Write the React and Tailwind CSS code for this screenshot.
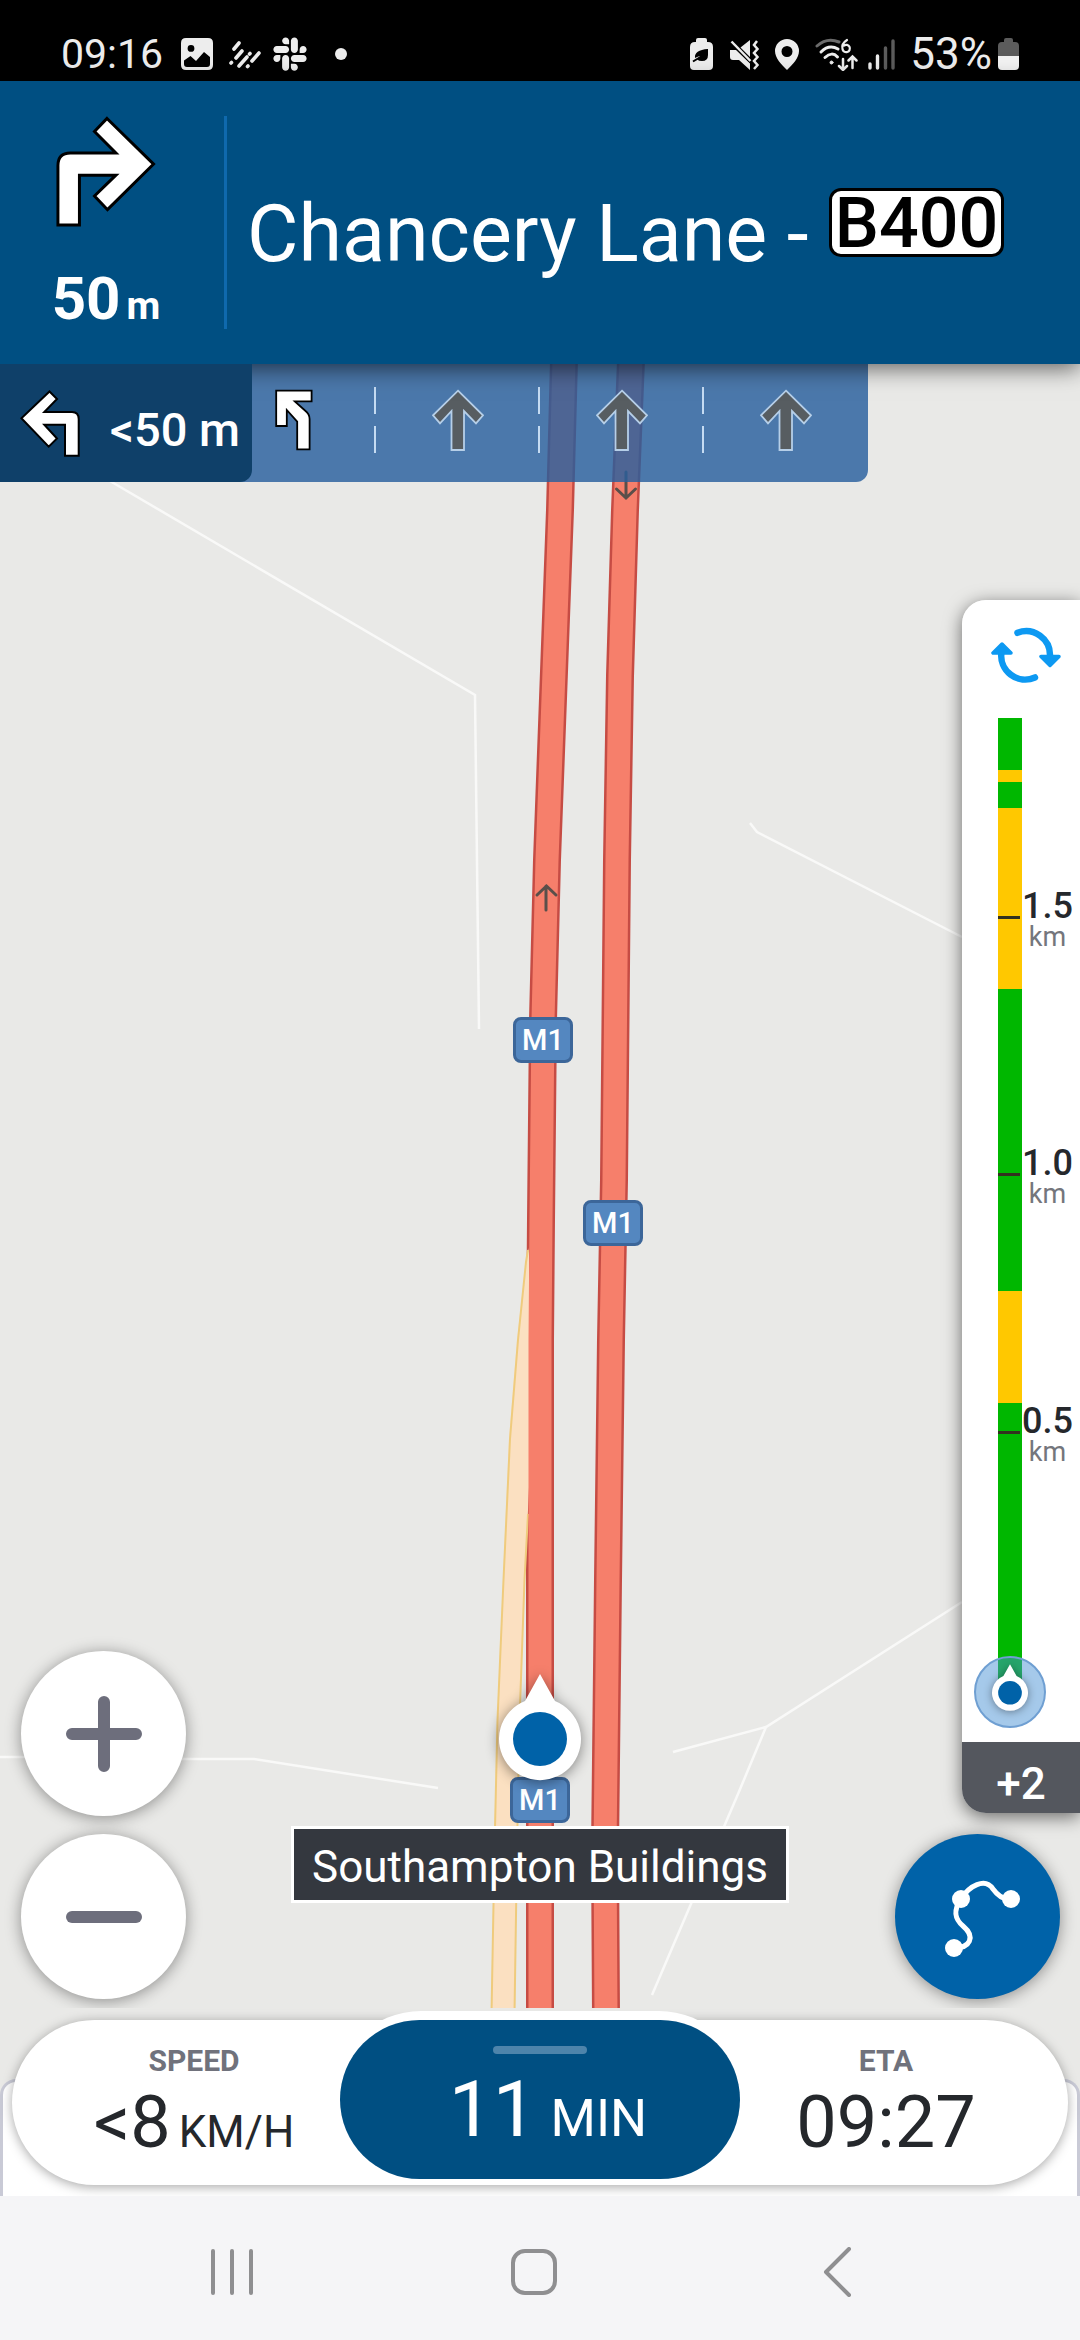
import { FaSlack } from 'react-icons/fa';

const TRAFFIC = [
  { color: 'bg-[#00b700]', height: 52 },
  { color: 'bg-[#ffc800]', height: 12 },
  { color: 'bg-[#00b700]', height: 26 },
  { color: 'bg-[#ffc800]', height: 181 },
  { color: 'bg-[#00b700]', height: 302 },
  { color: 'bg-[#ffc800]', height: 112 },
  { color: 'bg-[#00b700]', height: 277 },
];

const TICKS = [
  { label: '1.5', top: 170 },
  { label: '1.0', top: 427 },
  { label: '0.5', top: 685 },
];

const LEFT_ROAD = 'M564 -4 L560 146 L547 496 L543 656 L541 856 L540 976 V1650';
const RIGHT_ROAD = 'M631 -4 L625 146 L620 312 L617 496 L614 816 L611 976 L608 1216 L606 1396 L605 1486 L606 1650';

function StatusBar() {
  return (
    <div className="h-[81px] bg-black text-[#ededed] flex items-end justify-between pl-[61px] pr-[61px] pb-[6px]">
      <div className="flex items-center">
        <span className="text-[41px] leading-[42px]">09:16</span>
        <svg className="ml-[18px] w-8 h-8" viewBox="0 0 32 32" fill="currentColor">
          <path fillRule="evenodd" d="M5 0H27Q32 0 32 5V27Q32 32 27 32H5Q0 32 0 27V5Q0 0 5 0ZM10 7A3.4 3.4 0 1 0 10 13.800A3.400 3.400 0 1 0 10 7ZM3 22.500L9.500 18L15 23L23 14L29 19V26Q29 29 26 29H6Q3 29 3 26Z" />
        </svg>
        <svg className="ml-4 w-8 h-8" viewBox="0 0 32 32" fill="none" stroke="currentColor" strokeWidth="3.600" strokeLinecap="round">
          <path d="M5 11L10 5M7 20L13 13M2 25L2.500 24.500M10 28L18 19M20.500 16L21 15.500M18.500 28.500L19 28M23 23L30 15" />
        </svg>
        <FaSlack className="ml-3 w-[34px] h-[38px]" />
        <span className="ml-7 w-3 h-3 rounded-full bg-[#ededed]" />
      </div>
      <div className="flex items-center">
        <svg className="w-[23px] h-8" viewBox="0 0 23 32" fill="currentColor">
          <path d="M6 4V2Q6 0 8 0H15Q17 0 17 2V4H18Q23 4 23 9V28Q23 32 19 32H4Q0 32 0 28V9Q0 4 5 4Z" />
          <path d="M3 23.500L12 18" stroke="#000" strokeWidth="2" />
          <path d="M18 11V17Q18 23 12 23Q9 23 7 21.500L12 18Q8 18 5 20Q4 12 18 11Z" fill="#000" />
        </svg>
        <svg className="ml-4 w-[31px] h-[31px]" viewBox="0 0 31 31" fill="currentColor">
          <path d="M1 11H7L21 24.500V31L10 21H4Q1 21 1 18ZM21 1V18L11.500 8.500Z" />
          <path d="M2 3L24 25" fill="none" stroke="#000" strokeWidth="3" />
          <path d="M2.500 2.500L21.500 22" fill="none" stroke="currentColor" strokeWidth="2.500" />
          <path d="M28 2L25 6L28.500 10L25 14L28.500 18L25 22L28.500 26L25 30" fill="none" stroke="currentColor" strokeWidth="2.500" />
        </svg>
        <svg className="ml-[15px] w-6 h-[31px]" viewBox="0 0 24 31" fill="currentColor">
          <path fillRule="evenodd" d="M12 0A12 12 0 0 1 24 12C24 19 18 25 12 31C6 25 0 19 0 12A12 12 0 0 1 12 0ZM12 7A5.500 5.500 0 1 0 12 18A5.500 5.500 0 1 0 12 7Z" />
        </svg>
        <svg className="ml-4 w-[43px] h-[33px]" viewBox="0 0 43 33" fill="none" stroke="currentColor" strokeLinecap="round">
          <path d="M2 8Q12 -1 24 4" strokeWidth="3" stroke="#6b6b6b" />
          <path d="M6 14Q14 6 23 11M10 19.500Q17 13 22.500 19" strokeWidth="3" />
          <circle cx="16.500" cy="24.500" r="1.500" fill="currentColor" strokeWidth="1" />
          <path d="M32 2Q26 6 27.500 11A3.700 3.700 0 1 0 29 7.500" strokeWidth="2.200" />
          <path d="M28 21V31M24 28L28 32L32 28M37.500 30V19M33.500 22.500L37.500 18.500L41.500 22.500" strokeWidth="2.500" />
        </svg>
        <svg className="ml-2.5 w-7 h-[31px]" viewBox="0 0 28 31" stroke="currentColor" strokeWidth="3.400" strokeLinecap="round">
          <path d="M2 25V29M9.500 17V29" />
          <path d="M17.500 9V29M25 2V29" stroke="#5c5c5c" />
        </svg>
        <span className="ml-3.5 text-[44px] leading-[42px]">53%</span>
        <svg className="ml-1.5 w-[21px] h-8" viewBox="0 0 21 32">
          <path d="M6 4V2Q6 0 8 0H13Q15 0 15 2V4H17Q21 4 21 8V18H0V8Q0 4 4 4Z" fill="#5c5c5c" />
          <path d="M0 18H21V28Q21 32 17 32H4Q0 32 0 28Z" fill="#f2f2f2" />
        </svg>
      </div>
    </div>
  );
}

function ManeuverHeader() {
  return (
    <header className="relative z-10 bg-[#004f82] text-white flex py-[35px] shadow-[0_4px_22px_rgba(0,0,0,0.6)]">
      <div className="w-56 h-[213px] shrink-0 flex flex-col items-center pr-3">
        <svg className="w-[100px] h-[112px]" viewBox="0 0 100 112" fill="#fff" stroke="#000" strokeWidth="3">
          <path d="M51 2.500L98 48.500L51.500 94.500L38.400 80.700L60 59.700H23.200V110H1.500V50Q1.500 37.300 14 37.300H60L38.400 15.700Z" />
        </svg>
        <div className="mt-[42px] flex items-baseline gap-1.5 font-bold leading-none">
          <span className="text-[60px] leading-none">50</span>
          <span className="text-[39px] leading-none">m</span>
        </div>
      </div>
      <div className="w-[3px] shrink-0 bg-[#0f69ad]" />
      <div className="flex items-center pl-5 whitespace-nowrap">
        <h1 className="pt-6 text-[79px] leading-none">Chancery Lane -</h1>
        <span className="ml-5 h-[69px] px-[3px] flex items-center rounded-xl border-[3px] border-black bg-white text-black text-[70px] leading-none font-medium">
          B400
        </span>
      </div>
    </header>
  );
}

function StraightArrow() {
  return (
    <svg className="w-[52px] h-[62px]" viewBox="0 0 52 62" fill="#575d61" stroke="#b6cfe8" strokeWidth="1.800">
      <path d="M26 1.700L51 26.300L44 34.300L32 22V61H19.500V22L8 34.300L1 26.300Z" />
    </svg>
  );
}

function LaneDivider() {
  return (
    <span className="absolute right-0 top-[23px] flex flex-col gap-3">
      <span className="w-0.5 h-[27px] bg-[#c5dbf2]" />
      <span className="w-0.5 h-[27px] bg-[#c5dbf2]" />
    </span>
  );
}

function LaneGuidance() {
  return (
    <div className="relative flex h-[118px]">
      <div className="relative z-20 w-[252px] flex items-center gap-[30px] pl-5 rounded-br-xl bg-[#0f4069] text-white">
        <svg className="w-[60px] h-[67px]" viewBox="0 0 60 67" fill="#fff" stroke="#000" strokeWidth="2">
          <path d="M29.500 1.500L37 9L24.300 22H52Q58.700 22 58.700 29V65.700H45V34.700H24.300L37 48.500L28.700 56.700L1.400 28.300Z" />
        </svg>
        <span className="pt-3 text-[47px] leading-none font-medium whitespace-nowrap">&lt;50 m</span>
      </div>
      <div className="-ml-10 w-[656px] grid grid-cols-4 rounded-br-xl bg-[rgba(40,95,158,0.82)]">
        <div className="relative flex justify-center pt-[25px]">
          <svg className="w-[38px] h-[62px]" viewBox="0 0 38 62" fill="#fff" stroke="#000" strokeWidth="1.800">
            <path d="M1.200 1.700H36.600V12.300H19.800L30 21.500Q34.600 25 34.600 30V60.300H22.200V32.700L11.800 21V37H1.200Z" />
          </svg>
          <LaneDivider />
        </div>
        <div className="relative flex justify-center pt-[25px]">
          <StraightArrow />
          <LaneDivider />
        </div>
        <div className="relative flex justify-center pt-[25px]">
          <StraightArrow />
          <LaneDivider />
        </div>
        <div className="flex justify-center pt-[25px]">
          <StraightArrow />
        </div>
      </div>
    </div>
  );
}

function MapCanvas() {
  return (
    <svg className="absolute inset-0 w-full h-full" viewBox="0 0 1080 1644" preserveAspectRatio="xMidYMid slice" fill="none">
      <g stroke="#f9f9f8" strokeWidth="2.500">
        <path d="M110 117L475 331L479 665" />
        <path d="M750 459L757 468L962 573" />
        <path d="M673 1388L766 1363L962 1238M766 1363L738 1430L652 1631" />
        <path d="M0 1393H40L185 1395L254 1395L438 1424" />
      </g>
      <path d={LEFT_ROAD} stroke="#c64c44" strokeWidth="28" />
      <path d={RIGHT_ROAD} stroke="#c64c44" strokeWidth="28" />
      <path
        d="M529 884L526 898L517 976L509 1075L503 1216L497 1356L494 1486L491 1650H515L517 1486L519.500 1356L525 1216L530 1100Z"
        fill="#fbe0c1"
      />
      <path
        d="M528 886L526 898L518 976L510 1075L503.500 1216L497.500 1356L494.500 1486L491.500 1650M514.500 1650L517 1486L519.500 1356L524.500 1216L528 1150"
        stroke="#efcb7d"
        strokeWidth="2"
      />
      <path d={LEFT_ROAD} stroke="#f67f6b" strokeWidth="23" />
      <path d={RIGHT_ROAD} stroke="#f67f6b" strokeWidth="23" />
      {/* one-way arrows */}
      <g stroke="#5a4f4a" strokeWidth="3" strokeLinecap="round">
        <path d="M546 546V522M537 531L546.500 522L556 531" />
        <path d="M626 108V134M616.500 125L626 134L635.500 125" />
      </g>
    </svg>
  );
}

function RoadShield({ className }) {
  return (
    <span className={'absolute w-[60px] h-[46px] flex items-center justify-center rounded-lg border-[3px] border-[#3c6699] bg-[#5487c0] text-white text-[29px] leading-none font-medium ' + className}>
      M1
    </span>
  );
}

function VehicleMarker({ className }) {
  return (
    <svg className={'overflow-visible ' + className} viewBox="0 0 82 106">
      <path d="M41 0L56 27A41 41 0 1 1 26 27Z" fill="#fff" />
      <circle cx="41" cy="65" r="27" fill="#0062a8" />
    </svg>
  );
}

function TrafficPanel() {
  return (
    <aside className="absolute right-0 top-[236px] w-[118px] rounded-l-3xl shadow-[0_4px_18px_rgba(0,0,0,0.55)]">
      <div className="h-[1142px] rounded-tl-3xl bg-white pt-[26px]">
        <button type="button" aria-label="Refresh traffic" className="block ml-[27px] w-[74px] h-[58px]">
          <svg className="w-[74px] h-[58px]" viewBox="0 0 74 58" fill="none" stroke="#0d99f2" strokeWidth="6.500" strokeLinecap="round" strokeLinejoin="round">
            <path d="M28.500 6.800A24 24 0 0 1 61 30M46 51.500A24 24 0 0 1 12.500 26" />
            <path d="M52 30.500H70L61 39.500ZM4 27H22L13 18Z" fill="#0d99f2" strokeWidth="3.500" />
          </svg>
        </button>
        <div className="relative mt-[34px] ml-9 w-6">
          {TRAFFIC.map((part, i) => (
            <div key={i} className={part.color} style={{ height: part.height }} />
          ))}
          {TICKS.map((tick) => (
            <div key={tick.label} className="absolute left-0 flex" style={{ top: tick.top }}>
              <span className="mt-7 w-[22px] h-[3px] bg-[#33311f]" />
              <span className="ml-0.5 flex flex-col items-center leading-none">
                <span className="text-[36px] leading-none font-medium text-[#25282c]">{tick.label}</span>
                <span className="text-[27px] leading-none text-[#74767c]">km</span>
              </span>
            </div>
          ))}
          <div className="absolute -left-6 -bottom-12 w-[72px] h-[72px] rounded-full border-2 border-[#6f9fd2] bg-[#4b93d6]/50 flex justify-center pt-1.5">
            <VehicleMarker className="w-9 h-[47px] drop-shadow-[0_1px_4px_rgba(0,0,0,0.4)]" />
          </div>
        </div>
      </div>
      <div className="h-[71px] pt-5 rounded-bl-3xl bg-[#54575e] text-white text-[44px] leading-none font-medium text-center">+2</div>
    </aside>
  );
}

function ZoomControls() {
  return (
    <div className="absolute left-[21px] bottom-[9px] flex flex-col gap-[18px]">
      <button type="button" aria-label="Zoom in" className="w-[165px] h-[165px] rounded-full bg-white flex items-center justify-center shadow-[0_2px_16px_rgba(0,0,0,0.4)]">
        <svg className="w-20 h-20" viewBox="0 0 80 80" stroke="#6d6e7c" strokeWidth="12" strokeLinecap="round">
          <path d="M8 40H72M40 8V72" />
        </svg>
      </button>
      <button type="button" aria-label="Zoom out" className="w-[165px] h-[165px] rounded-full bg-white flex items-center justify-center shadow-[0_2px_16px_rgba(0,0,0,0.4)]">
        <svg className="w-20 h-20" viewBox="0 0 80 80" stroke="#6d6e7c" strokeWidth="12" strokeLinecap="round">
          <path d="M8 40H72" />
        </svg>
      </button>
    </div>
  );
}

function RouteButton() {
  return (
    <button type="button" aria-label="Route overview" className="absolute right-5 bottom-[9px] w-[165px] h-[165px] rounded-full bg-[#0062a8] flex items-center justify-center shadow-[0_2px_16px_rgba(0,0,0,0.4)]">
      <svg className="w-[165px] h-[165px]" viewBox="0 0 165 165" fill="none" stroke="#fff" strokeWidth="5">
        <path d="M66 65C74 52 90 43 98 55C103 62 108 66 116 65M66 65C57 78 61 86 68 92C81 103 75 114 59 114" />
        <g fill="#fff" stroke="none">
          <circle cx="66" cy="65" r="9" />
          <circle cx="116" cy="65" r="9" />
          <circle cx="59" cy="114" r="9" />
        </g>
      </svg>
    </button>
  );
}

function TripBar() {
  return (
    <section className="relative h-[188px] px-3 pt-3 bg-[#e9e9e7] overflow-hidden">
      <div className="absolute inset-x-0 bottom-0 top-[71px] rounded-t-2xl border-[3px] border-b-0 border-[#c9cad6] bg-white" />
      <div className="relative h-[165px] px-[42px] grid grid-cols-[1fr_412px_1fr] rounded-full bg-white shadow-[0_2px_12px_rgba(0,0,0,0.35)]">
        <div className="pt-[26px] flex flex-col items-center whitespace-nowrap">
          <span className="text-[30px] leading-none font-bold text-[#70727c]">SPEED</span>
          <span className="mt-[11px] flex items-baseline gap-2 text-[#25282c]">
            <span className="text-[72px] leading-none">&lt;8</span>
            <span className="text-[44px] leading-none">KM/H</span>
          </span>
        </div>
        <button type="button" className="-mt-[9px] h-[174px] pt-[9px] pb-[6px] px-1.5 rounded-full bg-white">
          <span className="h-[159px] pt-[26px] rounded-full bg-[#004f82] text-white flex flex-col items-center">
            <span className="w-[94px] h-2 rounded bg-[#4e84ab]" />
            <span className="mt-[17px] ml-4 flex items-baseline gap-3.5 whitespace-nowrap">
              <span className="text-[78px] leading-none">11</span>
              <span className="text-[52px] leading-none">MIN</span>
            </span>
          </span>
        </button>
        <div className="pt-[26px] flex flex-col items-center">
          <span className="text-[30px] leading-none font-bold text-[#70727c]">ETA</span>
          <span className="mt-[11px] text-[72px] leading-none text-[#25282c]">09:27</span>
        </div>
      </div>
    </section>
  );
}

function SystemNav() {
  return (
    <nav className="h-36 pt-2 pl-[81px] pr-[92px] grid grid-cols-3 items-center justify-items-center bg-[#f5f5f7]">
      <button type="button" aria-label="Recent apps">
        <svg className="w-[50px] h-[50px]" viewBox="0 0 50 50" stroke="#8f8f91" strokeWidth="4" strokeLinecap="round">
          <path d="M6 4V46M25 4V46M44 4V46" />
        </svg>
      </button>
      <button type="button" aria-label="Home">
        <svg className="w-[50px] h-[50px]" viewBox="0 0 50 50" fill="none" stroke="#8f8f91" strokeWidth="4">
          <rect x="4" y="4" width="42" height="42" rx="12" />
        </svg>
      </button>
      <button type="button" aria-label="Back">
        <svg className="w-[50px] h-[50px]" viewBox="0 0 50 50" fill="none" stroke="#8f8f91" strokeWidth="4" strokeLinecap="round" strokeLinejoin="round">
          <path d="M37 2L14 25L37 48" />
        </svg>
      </button>
    </nav>
  );
}

function App() {
  return (
    <div className="min-h-screen flex flex-col bg-[#e9e9e7] font-['Roboto',sans-serif]">
      <StatusBar />
      <ManeuverHeader />
      <main className="relative flex-1">
        <div className="absolute inset-0 overflow-hidden">
          <MapCanvas />
          <RoadShield className="left-[513px] top-[653px]" />
          <RoadShield className="left-[583px] top-[836px]" />
          <RoadShield className="left-[510px] top-[1413px]" />
          <VehicleMarker className="absolute left-[499px] top-[1310px] w-[82px] h-[106px] drop-shadow-[0_2px_7px_rgba(0,0,0,0.45)]" />
        </div>
        <LaneGuidance />
        <TrafficPanel />
        <ZoomControls />
        <RouteButton />
        <div className="absolute inset-x-0 bottom-[105px] flex justify-center">
          <div className="h-[77px] pt-1 px-[18px] flex items-center border-[3px] border-white bg-[#34383f] text-white text-[44px] leading-none">
            Southampton Buildings
          </div>
        </div>
      </main>
      <TripBar />
      <SystemNav />
    </div>
  );
}

export default App;
